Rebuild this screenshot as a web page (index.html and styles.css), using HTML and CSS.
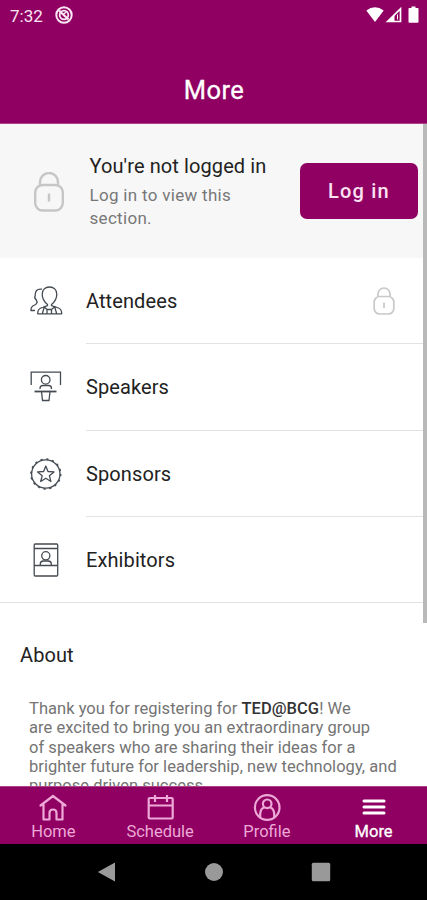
FILE: index.html
```html
<!DOCTYPE html>
<html lang="en">
<head>
<meta charset="utf-8">
<title>More</title>
<link rel="stylesheet" href="styles.css">
</head>
<body>
<div class="phone">
  <header class="header">
    <div class="status">
      <span class="time">7:32</span>
      <svg class="dnd" viewBox="0 0 18 18" fill="none" stroke="currentColor"><circle cx="9" cy="9" r="7.700" stroke-width="2"/><circle cx="9" cy="9" r="4.300" stroke-width="1.800"/><path d="M4 4.500l9.500 9" stroke-width="2.200"/><path d="M8 8.500l4-3" stroke-width="1.500"/></svg>
      <svg class="signals" viewBox="0 0 54 18" fill="currentColor"><path d="M0.300 4.500Q9-2 17.700 4.500L9 16z"/><path d="M21.500 15.500L34.500 2.800V15.500z" fill="none" stroke="currentColor" stroke-width="1.700"/><path d="M21 16l7.500-7.500V16z"/><path d="M31.500 8.500v5" stroke="currentColor" stroke-width="1"/><path d="M45.500 0.500h4v1.500h2.200q.8 0 .8.800v13q0 1-1 1h-8q-1 0-1-1v-13q0-.8.800-.8h2.200z"/></svg>
    </div>
    <h1 class="title">More</h1>
  </header>
  <main class="content">
    <section class="login">
      <svg class="lock" viewBox="0 0 30 40" fill="none" stroke="currentColor" stroke-width="2.400"><rect x="1.200" y="13" width="27.600" height="25.500" rx="7.500"/><path d="M6 13.500V10a9 9 0 0 1 18 0v3.500M15 21.500v8"/></svg>
      <div class="login-copy">
        <h2>You're not logged in</h2>
        <p>Log in to view this<br>section.</p>
      </div>
      <button class="login-button">Log in</button>
    </section>
    <nav class="list">
      <a class="row">
        <svg class="row-icon" viewBox="0 0 34 34" fill="none" stroke="currentColor" stroke-width="1.300" stroke-linecap="round" stroke-linejoin="round"><path d="M18.500 20.500c-3-2.500-5.300-6-5.300-10.300 0-4.500 3-7.200 7.300-7.200s7.300 2.700 7.300 7.200c0 4.300-2.300 7.800-5.300 10.300v1.200l7 2.300c2 .700 3.200 2.500 3.200 5.800h-24c0-3.300 1.200-5.100 3.200-5.800l6.600-2.300zM15 22.500l3 3h4.500l3.500-3M13.500 29l1.500-5M27.500 29l-1.500-5M18 26v3.500M22.500 26v3.500"/><path d="M12.500 5.200C8.200 4.500 5.800 7.200 6.200 11.500c-.8 1.500-.2 3.300 1 4.300l1 2.500-1.500 2.200-3 1.500c-1.200.8-1.800 1.900-1.800 4.500h3.500"/></svg>
        <span class="row-body"><span class="row-label">Attendees</span>
        <svg class="row-lock" viewBox="0 0 22 28" fill="none" stroke="currentColor" stroke-width="1.700"><rect x="1.200" y="9.500" width="19.600" height="17.500" rx="5.500"/><path d="M5 9.500V7a6 6 0 0 1 12 0v2.500M11 15.500v5.500"/></svg></span>
      </a>
      <a class="row">
        <svg class="row-icon" viewBox="0 0 34 34" fill="none" stroke="currentColor" stroke-width="1.300"><path d="M2.200 15V2.200h29.300V15"/><circle cx="16.700" cy="9.800" r="4.300"/><path d="M11 19v-.5q0-3 3-3h5.500q3 0 3 3v.5"/><path d="M5.500 21.500h22" stroke-width="1.800"/><path d="M12.500 21.500l1 9h6.500l1-9"/></svg>
        <span class="row-body"><span class="row-label">Speakers</span></span>
      </a>
      <a class="row">
        <svg class="row-icon" viewBox="0 0 34 34" fill="none" stroke="currentColor" stroke-width="1.300" stroke-linejoin="round"><circle cx="16.800" cy="17" r="14.200"/><circle cx="16.800" cy="17" r="14.900" stroke-width="1.500" stroke-dasharray="2.200 3.650"/><path d="M16.800 9l2.200 5.500 6 .4-4.600 3.800 1.500 5.800-5.100-3.200-5.100 3.200 1.500-5.800-4.600-3.800 6-.4z"/></svg>
        <span class="row-body"><span class="row-label">Sponsors</span></span>
      </a>
      <a class="row last">
        <svg class="row-icon" viewBox="0 0 34 34" fill="none" stroke="currentColor" stroke-width="1.300"><rect x="5.200" y="1" width="23.500" height="32" rx="1"/><path d="M5 5.500h23.500M5 22.500h23.500"/><circle cx="16.800" cy="12.800" r="4.100"/><path d="M11.300 22v-1.200q0-2.500 3-2.800h5q3 .3 3 2.800V22"/></svg>
        <span class="row-body"><span class="row-label">Exhibitors</span></span>
      </a>
    </nav>
    <section class="about">
      <h2>About</h2>
      <p>Thank you for registering for <b>TED@BCG</b>! We<br>are excited to bring you an extraordinary group<br>of speakers who are sharing their ideas for a<br>brighter future for leadership, new technology, and<br>purpose driven success.</p>
    </section>
    <i class="scrollbar"></i>
  </main>
  <nav class="tabs">
    <a class="tab"><svg viewBox="0 0 30 28" fill="none" stroke="currentColor" stroke-width="2.200" stroke-linejoin="round" stroke-linecap="round"><path d="M2.500 12.500L15 3l12.500 9.500M5.500 11v15.500h6v-6.500q0-3.500 3.500-3.500t3.500 3.500v6.500h6V11"/></svg><span>Home</span></a>
    <a class="tab"><svg viewBox="0 0 30 28" fill="none" stroke="currentColor" stroke-width="2.200" stroke-linejoin="round"><rect x="3.700" y="5" width="24" height="20.500" rx="1"/><path d="M3.500 12.500h24M10 2v7M22 2v7"/></svg><span>Schedule</span></a>
    <a class="tab"><svg viewBox="0 0 30 28" fill="none" stroke="currentColor" stroke-width="2.200"><circle cx="15.200" cy="14.500" r="12.300"/><circle cx="15.200" cy="10.800" r="4.300"/><path d="M8.200 24v-2.500q0-6 4.500-7.300M22.200 24v-2.500q0-6-4.500-7.300"/></svg><span>Profile</span></a>
    <a class="tab active"><svg viewBox="0 0 30 28" fill="none" stroke="currentColor" stroke-width="3" stroke-linecap="round"><path d="M5 8h20M5 14h20M5 20h20"/></svg><span>More</span></a>
  </nav>
  <footer class="system">
    <svg viewBox="0 0 20 20"><path d="M.8 10L18 .5v19z"/></svg>
    <svg viewBox="0 0 20 20"><circle cx="10" cy="10" r="9"/></svg>
    <svg viewBox="0 0 20 20"><rect x=".8" y=".8" width="18.400" height="18.400" rx="1.500"/></svg>
  </footer>
</div>
</body>
</html>
```
FILE: styles.css
```css
* { box-sizing: border-box; }
body { margin: 0; font-family: Roboto, "Liberation Sans", sans-serif; }
h1, h2, p { margin: 0; font-weight: 400; }
svg { display: block; flex: none; }
.phone { width: 427px; height: 900px; display: flex; flex-direction: column; overflow: hidden; background: #fff; }
.header { height: 124px; flex: none; background: #900062; color: #fff; border-bottom: 1px solid #a94586; }
.status { display: flex; align-items: center; height: 30px; padding: 0 7px 0 10px; }
.time { font-size: 17px; line-height: 30px; color: #fae7f4; padding-top: 1px; }
.dnd { width: 18px; height: 18px; margin-left: 12px; color: #fae7f4; }
.signals { width: 54px; height: 18px; margin-left: auto; }
.title { text-align: center; font-size: 25.500px; line-height: 30px; margin-top: 45px; padding-left: 1px; letter-spacing: .5px; font-weight: 400; -webkit-text-stroke: .3px currentColor; }
.content { flex: 1; min-height: 0; overflow: hidden; position: relative; }
.scrollbar { position: absolute; right: 0; top: 0; width: 4px; height: 499px; background: #b9b9b9; }
.login { height: 134px; background: #f7f7f7; display: flex; align-items: center; padding: 0 9px 0 34px; }
.lock { width: 30px; height: 40px; color: #c6c6c6; margin-top: 2px; }
.login-copy { margin-left: 25.500px; flex: 1; white-space: nowrap; }
.login-copy h2 { font-size: 20px; line-height: 26px; color: #222; letter-spacing: .1px; }
.login-copy p { font-size: 17px; line-height: 23px; color: #777; letter-spacing: .3px; margin-top: 5px; }
.login-button { width: 118px; height: 56px; border: 0; border-radius: 7px; background: #900062; color: #fbe2f2; font: 500 20px/56px Roboto, sans-serif; letter-spacing: 1.200px; padding: 0; }
.row { height: 86.300px; display: flex; align-items: center; padding-left: 29px; color: #454b52; }
.row-icon { width: 34px; height: 34px; }
.row-body { flex: 1; height: 100%; margin-left: 23px; display: flex; align-items: center; justify-content: space-between; padding-right: 32px; border-bottom: 1px solid #e2e2e2; }
.row-label { font-size: 20px; color: #222; letter-spacing: .1px; padding-top: 1px; }
.row-lock { width: 22px; height: 28px; color: #c8c8c8; }
.row.last { border-bottom: 1px solid #e2e2e2; }
.row.last .row-body { border-bottom: 0; }
.about { padding: 39px 20px 0; }
.about h2 { font-size: 20px; line-height: 26px; color: #222; letter-spacing: .1px; }
.about p { margin: 31px 0 0 9px; font-size: 16.500px; line-height: 19.300px; color: #747474; white-space: nowrap; letter-spacing: .03px; }
.about b { color: #333; font-weight: 500; }
.tabs { height: 58px; flex: none; background: #900062; display: grid; grid-template-columns: repeat(4, 1fr); border-top: 1px solid #a94586; }
.tab { display: flex; flex-direction: column; align-items: center; padding-top: 6px; color: #eda9d7; font-size: 16.500px; line-height: 22px; }
.tab svg { width: 30px; height: 28px; }
.tab.active { color: #fff; }
.tab.active span { -webkit-text-stroke: .3px currentColor; }
.system { height: 56px; flex: none; background: #000; fill: #999; display: flex; justify-content: center; align-items: center; gap: 87px; }
.system svg { width: 20px; height: 20px; }
```
